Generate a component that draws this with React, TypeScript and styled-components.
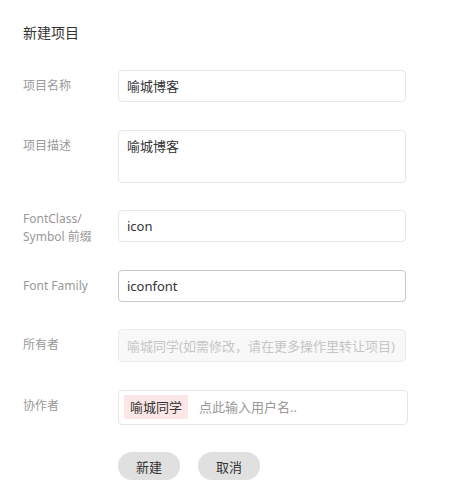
import React from "react";
import styled, { createGlobalStyle } from "styled-components";

const Global = createGlobalStyle`
  html, body { margin: 0; padding: 0; background: #fff; }
  body { font-family: "Noto Sans", "Noto Sans CJK SC", sans-serif; color: #333; }
  * { box-sizing: border-box; }
`;

const Page = styled.div`
  padding: 23px 0 0 23px;
  width: 463px;
`;

const Title = styled.div`
  font-size: 14px;
  line-height: 20px;
  color: #333;
  margin-bottom: 27px;
`;

const Form = styled.div`
  display: flex;
  flex-direction: column;
  gap: 27.5px;
`;

const Row = styled.div`
  display: flex;
  align-items: flex-start;
`;

const Label = styled.div<{ $multi?: boolean }>`
  width: 95px;
  flex: none;
  font-size: 12px;
  line-height: 18px;
  color: #999;
  padding-top: ${(p) => (p.$multi ? "0" : "7px")};
  margin-bottom: ${(p) => (p.$multi ? "-4px" : "0")};
`;

const Field = styled.div<{ $active?: boolean; $disabled?: boolean; $h?: number }>`
  width: 288px;
  height: ${(p) => p.$h ?? 32}px;
  border: 1px solid ${(p) => (p.$active ? "#c9c9c9" : p.$disabled ? "#ececec" : "#e6e6e6")};
  border-radius: 4px;
  background: ${(p) => (p.$disabled ? "#f8f8f8" : "#fff")};
  color: ${(p) => (p.$disabled ? "#c6c6c6" : "#333")};
  font-size: 13px;
  line-height: 18px;
  padding: 6px 8px;
  display: flex;
  align-items: ${(p) => (p.$h && p.$h > 40 ? "flex-start" : "center")};
`;

const TagField = styled(Field)`
  width: 290px;
  padding: 4px 5px;
  gap: 11px;
`;

const Tag = styled.span`
  background: #fbe7e7;
  color: #333;
  font-size: 13px;
  line-height: 24px;
  padding: 0 6px;
  border-radius: 2px;
`;

const Placeholder = styled.span`
  color: #999;
  font-size: 13px;
`;

const Buttons = styled.div`
  display: flex;
  gap: 18px;
  padding-left: 95px;
`;

const Button = styled.button`
  width: 62px;
  height: 28px;
  border: none;
  border-radius: 14px;
  background: #e0e0e0;
  color: #333;
  font-family: inherit;
  font-size: 13px;
  padding: 0;
  cursor: pointer;
`;

export default function App() {
  return (
    <>
      <Global />
      <Page>
        <Title>新建项目</Title>
        <Form>
          <Row>
            <Label>项目名称</Label>
            <Field>喻城博客</Field>
          </Row>
          <Row>
            <Label>项目描述</Label>
            <Field $h={53}>喻城博客</Field>
          </Row>
          <Row>
            <Label $multi>
              FontClass/
              <br />
              Symbol 前缀
            </Label>
            <Field>icon</Field>
          </Row>
          <Row>
            <Label>Font Family</Label>
            <Field $active>iconfont</Field>
          </Row>
          <Row>
            <Label>所有者</Label>
            <Field $disabled $h={33}>喻城同学(如需修改，请在更多操作里转让项目)</Field>
          </Row>
          <Row>
            <Label>协作者</Label>
            <TagField $h={35}>
              <Tag>喻城同学</Tag>
              <Placeholder>点此输入用户名..</Placeholder>
            </TagField>
          </Row>
          <Buttons>
            <Button>新建</Button>
            <Button>取消</Button>
          </Buttons>
        </Form>
      </Page>
    </>
  );
}
